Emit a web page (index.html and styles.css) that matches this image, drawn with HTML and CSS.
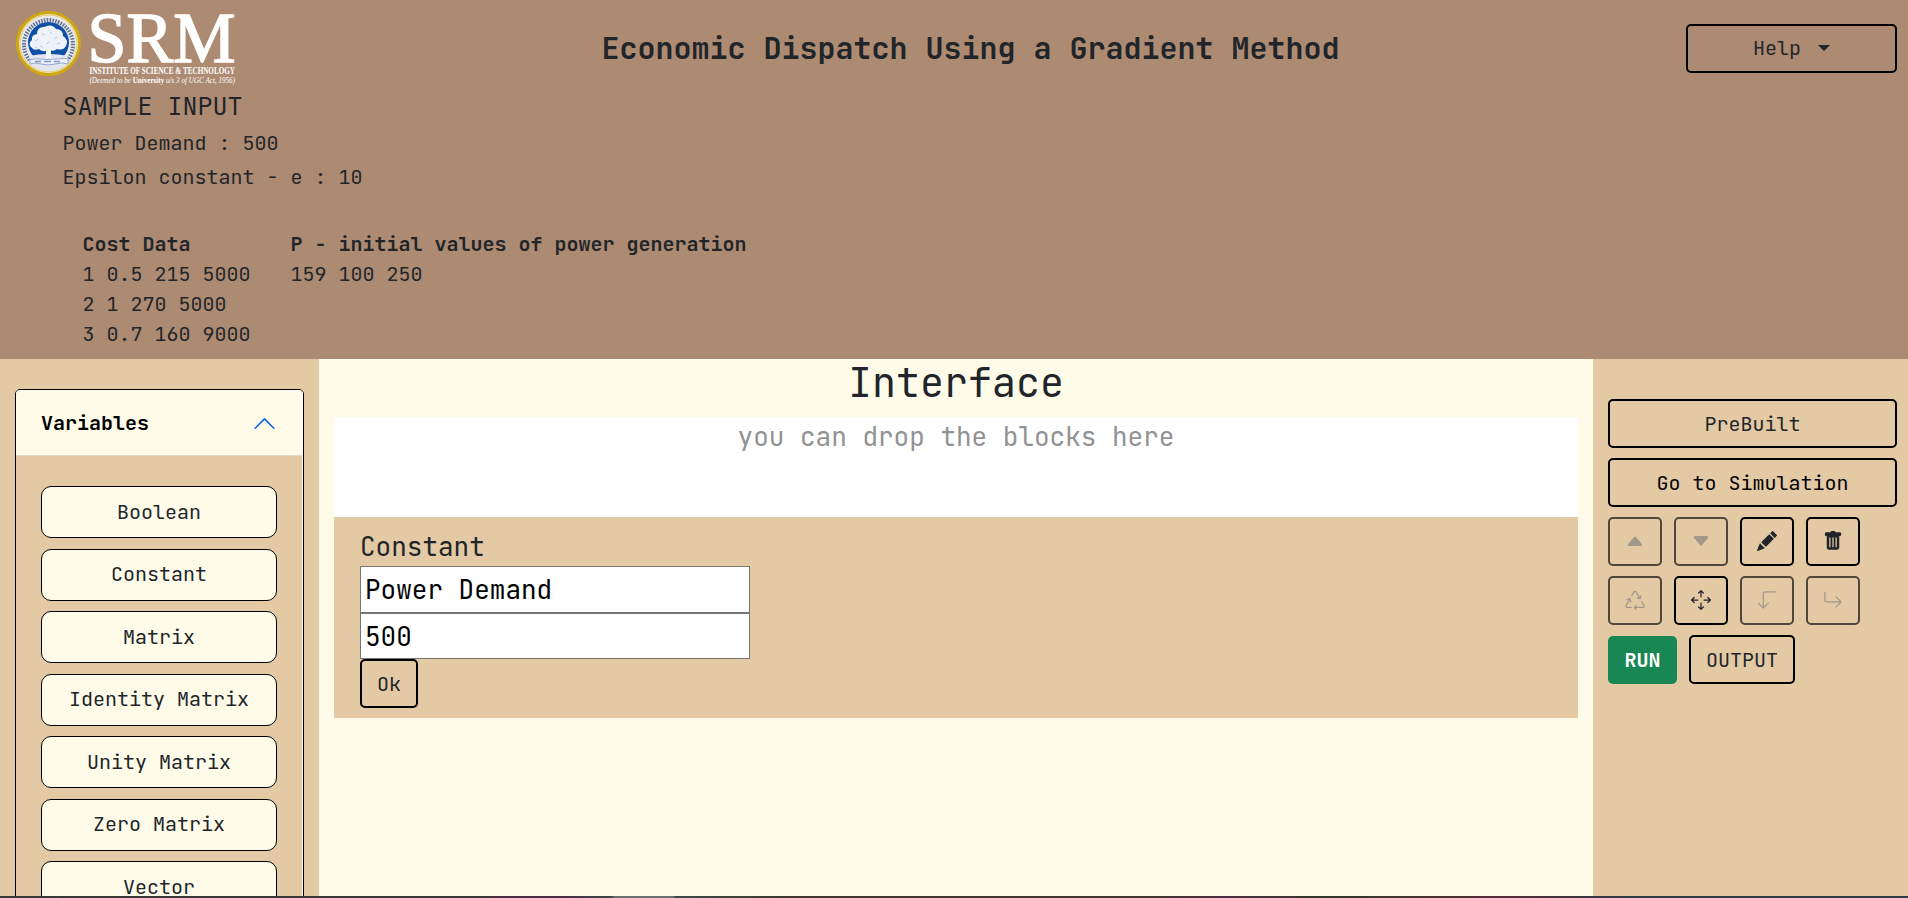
FILE: index.html
```
<!DOCTYPE html>
<html lang="en">
<head>
<meta charset="utf-8">
<title>Economic Dispatch Using a Gradient Method</title>
<link rel="stylesheet" href="styles.css">
</head>
<body>
<header class="top">
  <div class="bar">
    <svg class="logo" width="225" height="80" viewBox="0 0 225 80">
      <circle cx="33.500" cy="35.500" r="31" fill="#e9e9ec" stroke="#cfa80f" stroke-width="3"/>
      <circle cx="33.500" cy="35.500" r="28.500" fill="none" stroke="#e8cf62" stroke-width="1"/>
      <circle cx="33.500" cy="34.500" r="20.500" fill="#0f4fa5"/>
      <path d="M14.500 52A24.500 24.500 0 1 1 52.500 52" fill="none" stroke="#5f6f96" stroke-width="4" stroke-dasharray="1.500 1.300"/>
      <path d="M14 48q9-2 19.500-2t19.500 2l-2 8q-7 7-17.500 7t-17.500-7z" fill="#e2e6f0"/>
      <path d="M31 38h5v12l4 3H27l4-3z" fill="#f4f6fa"/>
      <path d="M17 40q-5-4 0-8-1-5 5-6 0-7 7-7 8-4 12 2 7 0 7 7 6 4 3 10-3 5-9 3-3 3-8 1-6 3-10-1-5 2-7-1z" fill="#eef2f8"/>
      <path d="M20 33l3-2m4-5l3 1m5-3l2 2m5 3l-3 2m6 4l-3 1m-8-2l-3 2m-6 2l3 2m-8-1l2 1" stroke="#b5c8e2" stroke-width="1"/>
      <path d="M15 52q4-2 10-1t16 0 12 0v5q-6-2-13 0t-14 0-11 0z" fill="#eef0f6" stroke="#8fa8d0" stroke-width="1"/>
      <path d="M20 53.500h6m3 0h7m3 0h6" stroke="#7b97c5" stroke-width="1.500"/>
      <text class="srm" x="72.500" y="54" textLength="148" lengthAdjust="spacingAndGlyphs">SRM</text>
      <text class="inst" x="74.500" y="66" textLength="145.500" lengthAdjust="spacingAndGlyphs">INSTITUTE OF SCIENCE &amp; TECHNOLOGY</text>
      <text class="deemed" x="74.500" y="75" textLength="145.500" lengthAdjust="spacingAndGlyphs">(Deemed to be <tspan class="uni">University</tspan> u/s 3 of UGC Act, 1956)</text>
    </svg>
    <h1 class="title">Economic Dispatch Using a Gradient Method</h1>
    <button class="btn help">Help <span class="caret"></span></button>
  </div>
  <section class="sample">
    <h2 class="sample-title">SAMPLE INPUT</h2>
    <p class="line">Power Demand : 500</p>
    <p class="line">Epsilon constant - e : 10</p>
    <div class="data">
      <div><b>Cost Data</b><br>1 0.5 215 5000<br>2 1 270 5000<br>3 0.7 160 9000</div>
      <div><b>P - initial values of power generation</b><br>159 100 250</div>
    </div>
  </section>
</header>
<main class="work">
  <aside class="left">
    <div class="accordion">
      <div class="acc-head">Variables
        <svg width="25" height="25" viewBox="0 0 16 16"><path fill="#0c63e4" fill-rule="evenodd" d="M1.646 4.646a.5.5 0 0 1 .708 0L8 10.293l5.646-5.647a.5.5 0 0 1 .708.708l-6 6a.5.5 0 0 1-.708 0l-6-6a.5.5 0 0 1 0-.708z" transform="rotate(180 8 8)"/></svg>
      </div>
      <div class="acc-body">
        <div class="block">Boolean</div>
        <div class="block">Constant</div>
        <div class="block">Matrix</div>
        <div class="block">Identity Matrix</div>
        <div class="block">Unity Matrix</div>
        <div class="block">Zero Matrix</div>
        <div class="block">Vector</div>
      </div>
    </div>
  </aside>
  <section class="center">
    <h2 class="heading">Interface</h2>
    <div class="drop"><span>you can drop the blocks here</span></div>
    <div class="card">
      <div class="card-title">Constant</div>
      <input class="field" value="Power Demand">
      <input class="field" value="500">
      <button class="btn ok">Ok</button>
    </div>
  </section>
  <aside class="right">
    <button class="btn wide">PreBuilt</button>
    <button class="btn wide black">Go to Simulation</button>
    <div class="row">
      <button class="btn icon off"><svg width="20" height="20" viewBox="0 0 16 16"><path d="m7.247 4.860-4.796 5.481c-.566.647-.106 1.659.753 1.659h9.592a1 1 0 0 0 .753-1.659l-4.796-5.480a1 1 0 0 0-1.506 0z"/></svg></button>
      <button class="btn icon off"><svg width="20" height="20" viewBox="0 0 16 16"><path d="M7.247 11.140 2.451 5.658C1.885 5.013 2.345 4 3.204 4h9.592a1 1 0 0 1 .753 1.659l-4.796 5.480a1 1 0 0 1-1.506 0z"/></svg></button>
      <button class="btn icon"><svg width="20" height="20" viewBox="0 0 16 16"><path d="M12.854.146a.5.5 0 0 0-.707 0L10.500 1.793 14.207 5.500l1.647-1.646a.5.5 0 0 0 0-.708l-3-3zm.646 6.061L9.793 2.500 3.293 9H3.500a.5.5 0 0 1 .5.5v.5h.5a.5.5 0 0 1 .5.5v.5h.5a.5.5 0 0 1 .5.5v.5h.5a.5.5 0 0 1 .5.5v.207l6.500-6.500zm-7.468 7.468A.5.5 0 0 1 6 13.500V13h-.5a.5.5 0 0 1-.5-.5V12h-.5a.5.5 0 0 1-.5-.5V11h-.5a.5.5 0 0 1-.5-.5V10h-.5a.499.499 0 0 1-.175-.032l-.179.178a.5.5 0 0 0-.110.168l-2 5a.5.5 0 0 0 .650.650l5-2a.5.5 0 0 0 .168-.110l.178-.178z"/></svg></button>
      <button class="btn icon"><svg width="20" height="20" viewBox="0 0 16 16"><path d="M2.500 1a1 1 0 0 0-1 1v1a1 1 0 0 0 1 1H3v9a2 2 0 0 0 2 2h6a2 2 0 0 0 2-2V4h.5a1 1 0 0 0 1-1V2a1 1 0 0 0-1-1H10a1 1 0 0 0-1-1H7a1 1 0 0 0-1 1H2.500zm3 4a.5.5 0 0 1 .5.5v7a.5.5 0 0 1-1 0v-7a.5.5 0 0 1 .5-.5zM8 5a.5.5 0 0 1 .5.5v7a.5.5 0 0 1-1 0v-7A.5.5 0 0 1 8 5zm3 .5v7a.5.5 0 0 1-1 0v-7a.5.5 0 0 1 1 0z"/></svg></button>
    </div>
    <div class="row">
      <button class="btn icon off"><svg width="20" height="20" viewBox="0 0 16 16"><path d="M9.302 1.256a1.500 1.500 0 0 0-2.604 0l-1.704 2.980a.5.5 0 0 0 .869.497l1.703-2.981a.5.5 0 0 1 .868 0l2.540 4.444-1.256-.337a.5.5 0 1 0-.260.966l2.415.647a.5.5 0 0 0 .613-.353l.647-2.415a.5.5 0 1 0-.966-.259l-.333 1.242-2.532-4.431zM2.973 7.773l-1.255.337a.5.5 0 1 1-.260-.966l2.416-.647a.5.5 0 0 1 .612.353l.647 2.415a.5.5 0 0 1-.966.259l-.333-1.242-2.545 4.454a.5.5 0 0 0 .434.748H5a.5.5 0 0 1 0 1H1.723A1.500 1.500 0 0 1 .421 12.240l2.552-4.467zm10.890 1.463a.5.5 0 1 0-.868.496l1.716 3.004a.5.5 0 0 1-.434.748h-5.570l.647-.646a.5.5 0 1 0-.708-.707l-1.500 1.500a.498.498 0 0 0 0 .707l1.500 1.500a.5.5 0 1 0 .708-.707l-.647-.647h5.570a1.500 1.500 0 0 0 1.302-2.244l-1.716-3.004z"/></svg></button>
      <button class="btn icon"><svg width="20" height="20" viewBox="0 0 16 16"><path fill-rule="evenodd" d="M7.646.146a.5.5 0 0 1 .708 0l2 2a.5.5 0 0 1-.708.708L8.500 1.707V5.500a.5.5 0 0 1-1 0V1.707L6.354 2.854a.5.5 0 1 1-.708-.708l2-2zM8 10a.5.5 0 0 1 .5.5v3.793l1.146-1.147a.5.5 0 0 1 .708.708l-2 2a.5.5 0 0 1-.708 0l-2-2a.5.5 0 0 1 .708-.708L7.500 14.293V10.500A.5.5 0 0 1 8 10zM.146 8.354a.5.5 0 0 1 0-.708l2-2a.5.5 0 1 1 .708.708L1.707 7.500H5.500a.5.5 0 0 1 0 1H1.707l1.147 1.146a.5.5 0 0 1-.708.708l-2-2zM10 8a.5.5 0 0 1 .5-.5h3.793l-1.147-1.146a.5.5 0 0 1 .708-.708l2 2a.5.5 0 0 1 0 .708l-2 2a.5.5 0 0 1-.708-.708L14.293 8.500H10.500A.5.5 0 0 1 10 8z"/></svg></button>
      <button class="btn icon off"><svg width="20" height="20" viewBox="0 0 16 16"><path d="M15 1.500H6.500a1.500 1.500 0 0 0-1.500 1.500V14.200M1 10.500l4 4 4-4" fill="none" stroke="#505968" stroke-linecap="round" stroke-linejoin="round"/></svg></button>
      <button class="btn icon off"><svg width="20" height="20" viewBox="0 0 16 16"><path d="M1.500 2v6A1.500 1.500 0 0 0 3 9.500h11.200M10.500 5.500l4 4-4 4" fill="none" stroke="#505968" stroke-linecap="round" stroke-linejoin="round"/></svg></button>
    </div>
    <div class="row last">
      <button class="btn run">RUN</button>
      <button class="btn output">OUTPUT</button>
    </div>
  </aside>
</main>
<footer class="strip"></footer>
</body>
</html>
```

FILE: styles.css
```
* { box-sizing: border-box; }
body {
  margin: 0;
  height: 898px;
  overflow: hidden;
  display: flex;
  flex-direction: column;
  background: #fffbe9;
  color: #212529;
  font: 20px/30px "JetBrains Mono", "DejaVu Sans Mono", monospace;
}
h1, h2, p { margin: 0; }
.top { height: 359px; flex: none; background: #ad8b73; }
.bar { display: flex; justify-content: space-between; height: 88px; padding: 8px 11px 0 15px; }
.logo { flex: none; overflow: visible; }
.srm { font: 71px "Liberation Serif", serif; fill: #fff; stroke: #fff; stroke-width: 1.500; }
.inst { font: bold 9.500px "Liberation Serif", serif; fill: #fff; }
.deemed { font: italic 7.500px "Liberation Serif", serif; fill: #fff; }
.uni { font-weight: bold; font-style: normal; }
.title { font-size: 30px; line-height: 36px; padding-top: 22px; margin-left: 15px; }
.btn {
  height: 49px;
  padding: 0 14px;
  border: 2px solid #000;
  border-radius: 5px;
  background: transparent;
  color: #212529;
  font: inherit;
  white-space: nowrap;
}
.help { width: 211px; margin-top: 16px; padding-bottom: 2px; display: flex; align-items: center; justify-content: center; gap: 17px; }
.caret { border: 6px solid transparent; border-top-color: #212529; border-bottom: 0; }
.sample { padding: 3px 63px 0 62.500px; }
.sample-title { font-size: 25px; font-weight: 400; line-height: 30px; }
.line { line-height: 24px; padding-top: 10px; }
.data { display: flex; gap: 40px; padding: 39.500px 20px 0; }
.work { flex: 1; min-height: 0; display: flex; }
.left { width: 319px; flex: none; background: #e3caa5; padding: 30px 15px 0; overflow: hidden; }
.accordion { border: 1px solid #000; border-radius: 5px 5px 0 0; height: 620px; overflow: hidden; background: #e3caa5; box-shadow: inset -1px 0 #fffbe9; }
.acc-head { display: flex; justify-content: space-between; align-items: center; height: 66px; padding: 0 26px 0 25px; background: #fffbe9; border-bottom: 1px solid #dedccd; color: #000; font-weight: 700; }
.acc-head svg { position: relative; top: 1px; }
.acc-body { display: flex; flex-direction: column; gap: 10.500px; padding: 30px 26px 0 25px; }
.block { flex: none; height: 52px; border: 1px solid #000; border-radius: 10px; background: #fffbe9; display: flex; align-items: center; justify-content: center; padding-bottom: 1px; }
.center { flex: 1; padding: 0 15px; }
.heading { font-size: 40px; font-weight: 400; line-height: 48px; padding-bottom: 10px; text-align: center; }
.drop { height: 100px; background: #fff; text-align: center; font-size: 26px; line-height: 40px; color: #909294; }
.card { height: 201px; background: #e3caa5; padding: 10px 26px 0; display: flex; flex-direction: column; align-items: flex-start; }
.card-title { font-size: 26px; line-height: 39px; }
.field { width: 390px; height: 47px; margin: 0; border: 1px solid #767676; padding: 1px 4px; font: 26px "JetBrains Mono", "DejaVu Sans Mono", monospace; color: #000; background: #fff; border-radius: 0; }
.field + .field { height: 46px; }
.ok { width: 58px; padding: 0; }
.right { width: 315px; flex: none; background: #e3caa5; padding: 40px 11px 0 15px; display: flex; flex-direction: column; gap: 10px; }
.wide { width: 100%; flex: none; }
.black { color: #000; }
.row { display: flex; gap: 12px; }
.icon { width: 54px; padding: 0 0 1px; display: flex; align-items: center; justify-content: center; }
.icon svg { fill: #212529; }
.off { border-color: rgba(0, 0, 0, .65); }
.off svg { fill: #505968; opacity: .43; }
.last { align-items: flex-end; }
.run { width: 69px; height: 48px; padding: 0; border: 0; background: #198754; color: #fff; font-weight: 700; }
.output { width: 106px; padding: 0; }
.strip { height: 2px; flex: none; background: linear-gradient(90deg, #3a3a36 0 60px, #3a3536 60px 490px, #4c2f42 490px 560px, #3d4448 612px, #69706f 614px 674px, #3b4a48 675px, #3f3a2c 780px 1130px, #4c2f42 1220px, #33382c 1330px, #552f38 1500px, #2c3b44 1640px 100%); }
```
